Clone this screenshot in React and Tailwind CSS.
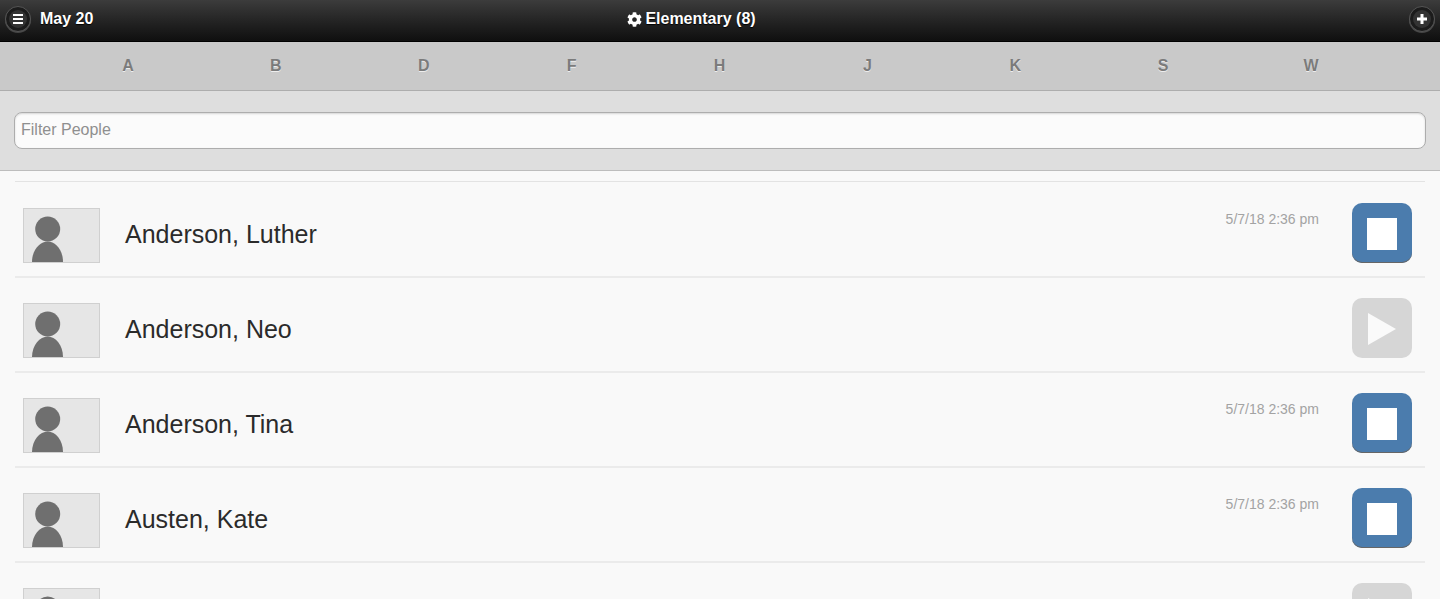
import React from 'react';
import { FaCog } from 'react-icons/fa';

const letters = ['A', 'B', 'D', 'F', 'H', 'J', 'K', 'S', 'W'];

// last row is cut by the window, only its avatar and button show
const people = [
  { id: 1, name: 'Anderson, Luther', time: '5/7/18 2:36 pm', active: true },
  { id: 2, name: 'Anderson, Neo', time: '', active: false },
  { id: 3, name: 'Anderson, Tina', time: '5/7/18 2:36 pm', active: true },
  { id: 4, name: 'Austen, Kate', time: '5/7/18 2:36 pm', active: true },
  { id: 5, name: '', time: '', active: false },
];

function RoundButton({ children }) {
  return (
    <button className="flex h-[26px] w-[26px] shrink-0 items-center justify-center rounded-full border border-[#555] bg-[#1c1c1c] shadow-[0_1px_0_rgba(255,255,255,0.2)]">
      <span className="flex h-[18px] w-[18px] items-center justify-center rounded-full bg-[#333]">
        {children}
      </span>
    </button>
  );
}

function Avatar() {
  return (
    <div className="h-[55px] w-[77px] shrink-0 border border-[#d0d0d0] bg-[#e6e6e6]">
      <svg width="75" height="53" viewBox="0 0 75 53" className="block">
        <circle cx="23.7" cy="20" r="12.5" fill="#6f6f6f" />
        <path d="M8 53 C8 41 16 32.5 23.7 32.5 C31.5 32.5 39 41 39 53 Z" fill="#6f6f6f" />
      </svg>
    </div>
  );
}

function Toggle({ active }) {
  if (active) {
    return (
      <div className="flex h-[60px] w-[60px] items-center justify-center rounded-[10px] bg-[#4b7cad] shadow-[inset_0_-1px_0_#666]">
        <div className="mt-[2px] h-[32px] w-[30px] bg-white" />
      </div>
    );
  }
  return (
    <div className="flex h-[60px] w-[60px] items-center justify-center rounded-[10px] bg-[#d6d6d6]">
      <svg width="30" height="32" viewBox="0 0 30 32" className="mt-[2px]">
        <path d="M1 0 L29 16 L1 32 Z" fill="#fafafa" />
      </svg>
    </div>
  );
}

function PersonRow({ person }) {
  return (
    <div className="flex h-[95px] shrink-0 border-b-2 border-[#ebebeb] pl-2 pr-[13px]">
      <div className="mt-[25px]">
        <Avatar />
      </div>
      <div className="ml-[25px] mt-[35px] flex-1 text-[25px] leading-[32px] text-[#2b2b2b]">{person.name}</div>
      <div className="mt-[26px] text-sm leading-5 text-[#a3a3a3]">{person.time}</div>
      <div className="ml-[33px] mt-[20px]">
        <Toggle active={person.active} />
      </div>
    </div>
  );
}

export default function App() {
  return (
    <div className="flex h-screen flex-col overflow-hidden bg-[#f9f9f9] font-['Liberation_Sans',Arial,sans-serif]">
      <header className="flex h-[42px] shrink-0 items-center border-b border-black bg-gradient-to-b from-[#3c3c3c] to-[#0f0f0f] px-[5px] pb-[3px] text-white">
        <RoundButton>
          <span className="flex w-[10px] flex-col gap-[2px]">
            <span className="h-[2px] bg-white" />
            <span className="h-[2px] bg-white" />
            <span className="h-[2px] bg-white" />
          </span>
        </RoundButton>
        <span className="ml-[9px] text-base font-bold [text-shadow:0_1px_1px_#000]">May 20</span>
        <div className="ml-[534px] flex items-center gap-[3px] text-base font-bold [text-shadow:0_1px_1px_#000]">
          <FaCog className="h-[15px] w-[15px]" />
          <span>Elementary (8)</span>
        </div>
        <div className="ml-auto">
          <RoundButton>
            <svg width="12" height="12" viewBox="0 0 12 12">
              <path d="M6 1 V11 M1 6 H11" stroke="#fff" strokeWidth="3" />
            </svg>
          </RoundButton>
        </div>
      </header>

      <nav className="flex h-[49px] shrink-0 items-center border-b border-[#adadad] bg-[#c9c9c9] pl-[54px] pr-[55px]">
        {letters.map((l) => (
          <div key={l} className="flex-1 text-center text-base font-bold text-[#7b7b7b] [text-shadow:0_1px_0_#eee]">
            {l}
          </div>
        ))}
      </nav>

      <div className="h-[80px] shrink-0 border-b border-[#bdbdbd] bg-[#dedede] px-[14px] pt-[21px]">
        <input
          placeholder="Filter People"
          className="h-[37px] w-full rounded-lg border border-[#adadad] bg-[#fbfbfb] px-[6px] pb-[2px] text-base text-[#333] shadow-[inset_0_1px_2px_rgba(0,0,0,0.15)] outline-none placeholder:text-[#8f8f8f]"
        />
      </div>

      <main className="mt-[10px] flex flex-col px-[15px]">
        <div className="mb-px h-px shrink-0 bg-[#e3e3e3]" />
        {people.map((p) => (
          <PersonRow key={p.id} person={p} />
        ))}
      </main>
    </div>
  );
}
